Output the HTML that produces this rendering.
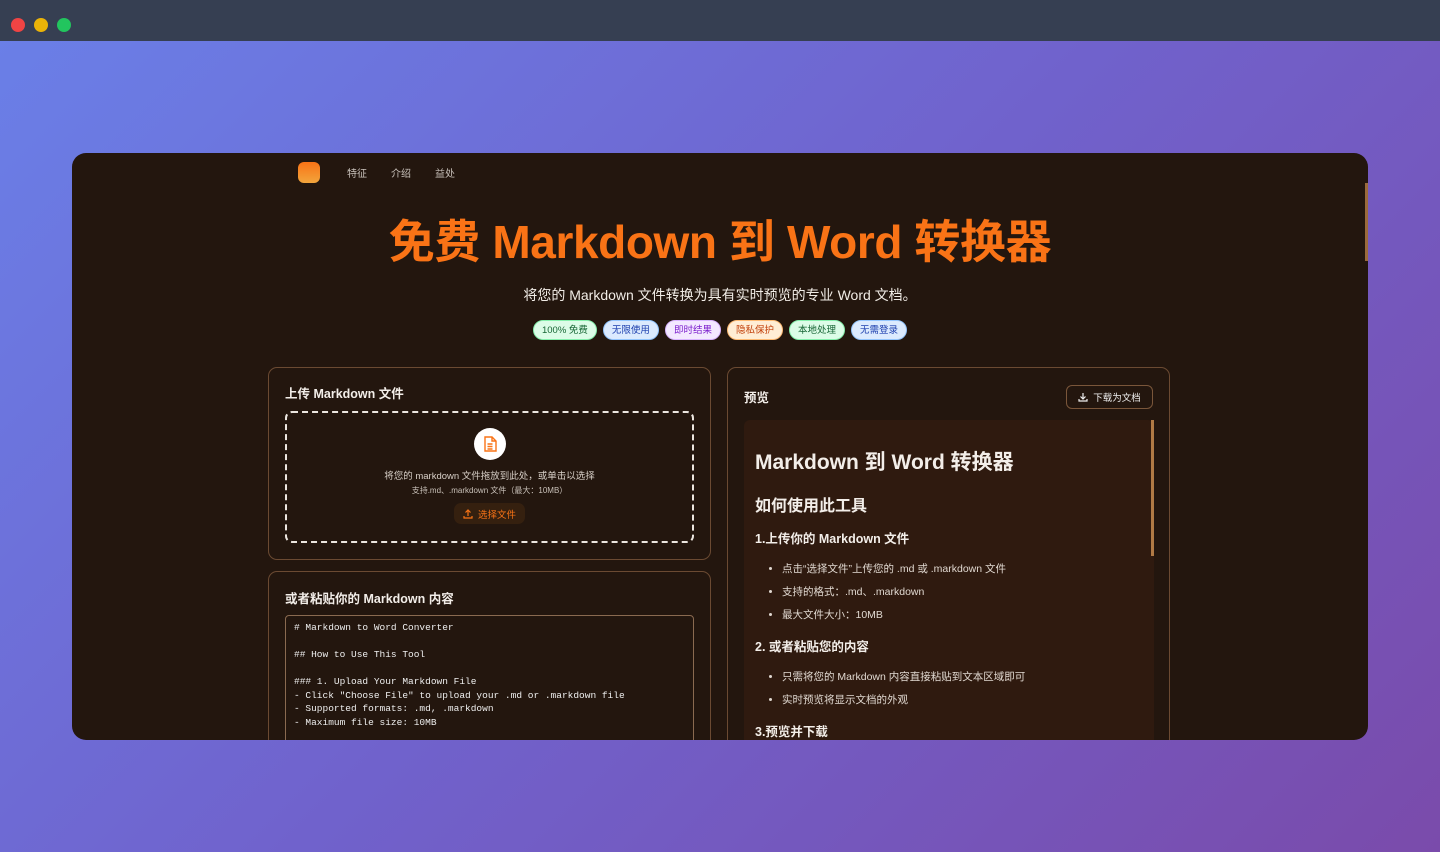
<!DOCTYPE html>
<html><head><meta charset="utf-8"><style>
*{box-sizing:border-box;margin:0;padding:0}
body{width:1440px;height:852px;overflow:hidden;font-family:"Liberation Sans","Noto Sans CJK SC",sans-serif;background:linear-gradient(135deg,#6a80e8 0%,#7062cc 50%,#7a4bab 100%);position:relative}
.top{position:absolute;left:0;top:0;width:1440px;height:41px;background:#363f52}
.dot{position:absolute;top:18px;width:14px;height:14px;border-radius:50%}
.card{position:absolute;left:72px;top:153px;width:1296px;height:587px;background:#23160e;border-radius:14px;overflow:hidden}
.sb{position:absolute;right:0;top:30px;width:3px;height:78px;background:#9a6a3c}
.nav{position:absolute;top:9px;left:226px;display:flex;align-items:center;font-size:10px;color:#c9c2bb}
.logo{width:22px;height:21px;border-radius:6px;background:linear-gradient(180deg,#f97316,#f2a53c);margin-right:27px}
.nav span{margin-right:24px}
h1{position:absolute;top:59px;left:0;width:100%;text-align:center;color:#f97316;font-size:46px;font-weight:bold;letter-spacing:-0.4px;line-height:60px}
.sub{position:absolute;top:132px;width:100%;text-align:center;color:#f1ece6;font-size:14px}
.tags{position:absolute;top:167px;width:100%;display:flex;justify-content:center;gap:6px}
.tag{height:20px;padding:0 8px;border-radius:10px;font-size:9.5px;line-height:19px;border:1px solid}
.panel{position:absolute;border:1px solid #6b4a32;border-radius:9px;background:#23160e}
.pt{position:absolute;left:16px;font-size:12.5px;font-weight:bold;color:#f3eee9}
.drop{position:absolute;left:16px;top:43px;width:409px;height:132px;border:2px dashed #ece6e0;border-radius:7px;text-align:center}
.ic{width:32px;height:32px;border-radius:50%;background:#fff;margin:15px auto 0;display:flex;align-items:center;justify-content:center}
.t1{font-size:9.5px;color:#d8d0c8;margin-top:8px}
.t2{font-size:8px;color:#c8c0b8;margin-top:3px}
.btn{display:inline-flex;align-items:center;gap:5px;margin-top:7px;height:21px;padding:0 9px;border-radius:7px;background:#35200f;color:#f97316;font-size:9.5px}
.ta{position:absolute;left:16px;top:43px;width:409px;height:140px;border:1px solid #8a6a50;border-radius:4px;padding:5px 8px;font-family:"Liberation Mono",monospace;font-size:9.5px;line-height:13.5px;color:#eee;white-space:pre}
.pv{position:absolute;left:16px;top:52px;width:410px;height:340px;background:#2f1a0f;border-radius:6px;padding:26px 11px;color:#f3eee9}
.pv h2{font-size:21px;font-weight:bold;margin-bottom:16px}
.pv h3{font-size:16px;font-weight:bold;margin-bottom:12px}
.pv h4{font-size:12.5px;font-weight:bold;margin-bottom:14px}
.pv ul{margin-left:17px;padding-left:10px;font-size:10.5px;color:#e0d8d0;margin-bottom:14px}
.pv li{margin-bottom:8px}
</style></head><body>
<div class="top"><div class="dot" style="left:11px;background:#ef4444"></div><div class="dot" style="left:34px;background:#eab308"></div><div class="dot" style="left:57px;background:#22c55e"></div></div>
<div class="card">
<div class="sb"></div>
<div class="nav"><div class="logo"></div><span>特征</span><span>介绍</span><span>益处</span></div>
<h1>免费 Markdown 到 Word 转换器</h1>
<div class="sub">将您的 Markdown 文件转换为具有实时预览的专业 Word 文档。</div>
<div class="tags">
<div class="tag" style="background:#dcfce7;color:#166534;border-color:#86efac">100% 免费</div>
<div class="tag" style="background:#dbeafe;color:#1e40af;border-color:#93c5fd">无限使用</div>
<div class="tag" style="background:#f3e8ff;color:#7e22ce;border-color:#d8b4fe">即时结果</div>
<div class="tag" style="background:#ffedd5;color:#c2410c;border-color:#fdba74">隐私保护</div>
<div class="tag" style="background:#dcfce7;color:#166534;border-color:#86efac">本地处理</div>
<div class="tag" style="background:#dbeafe;color:#1e40af;border-color:#93c5fd">无需登录</div>
</div>
<div class="panel" style="left:196px;top:214px;width:443px;height:193px">
<div class="pt" style="top:15px">上传 Markdown 文件</div>
<div class="drop">
<div class="ic"><svg width="14" height="16" viewBox="0 0 14 16" fill="none" stroke="#f97316" stroke-width="1.4"><path d="M2 1h7l4 4v10H2z"/><path d="M9 1v4h4M4.5 8h5M4.5 10.5h5M4.5 13h5"/></svg></div>
<div class="t1">将您的 markdown 文件拖放到此处，或单击以选择</div>
<div class="t2">支持.md、.markdown 文件（最大：10MB）</div>
<div class="btn"><svg width="10" height="10" viewBox="0 0 10 10" fill="none" stroke="#f97316" stroke-width="1.2"><path d="M5 7V1M2.5 3.5L5 1l2.5 2.5M1 7v2h8V7"/></svg>选择文件</div>
</div></div>
<div class="panel" style="left:196px;top:418px;width:443px;height:200px">
<div class="pt" style="top:16px">或者粘贴你的 Markdown 内容</div>
<div class="ta"># Markdown to Word Converter

## How to Use This Tool

### 1. Upload Your Markdown File
- Click "Choose File" to upload your .md or .markdown file
- Supported formats: .md, .markdown
- Maximum file size: 10MB</div>
</div>
<div class="panel" style="left:655px;top:214px;width:443px;height:400px">
<div class="pt" style="top:19px">预览</div>
<div style="position:absolute;right:16px;top:17px;width:87px;height:24px;border:1px solid #7a563a;border-radius:6px;color:#eee;font-size:9.5px;display:flex;align-items:center;justify-content:center;gap:5px"><svg width="10" height="10" viewBox="0 0 10 10" fill="none" stroke="#eee" stroke-width="1.2"><path d="M5 1v5.5M2.5 4.5L5 7l2.5-2.5M1 7v2h8V7"/></svg>下载为文档</div>
<div class="pv">
<div style="position:absolute;right:0;top:0;width:3px;height:136px;background:#b07a45"></div>
<h2>Markdown 到 Word 转换器</h2>
<h3>如何使用此工具</h3>
<h4>1.上传你的 Markdown 文件</h4>
<ul><li>点击“选择文件”上传您的 .md 或 .markdown 文件</li><li>支持的格式：.md、.markdown</li><li>最大文件大小：10MB</li></ul>
<h4>2. 或者粘贴您的内容</h4>
<ul><li>只需将您的 Markdown 内容直接粘贴到文本区域即可</li><li>实时预览将显示文档的外观</li></ul>
<h4>3.预览并下载</h4>
</div></div>
</div>
</body></html>
